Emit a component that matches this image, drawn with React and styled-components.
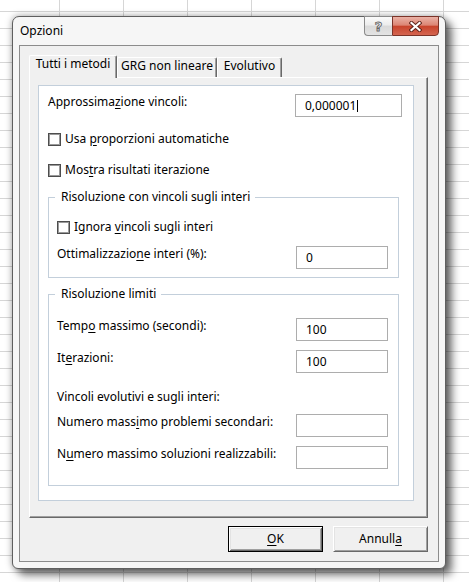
import React from "react";
import styled, { createGlobalStyle } from "styled-components";

const GlobalStyle = createGlobalStyle`
  html, body {
    margin: 0;
    padding: 0;
  }
  body {
    font-family: "Noto Sans", "Open Sans", sans-serif;
    font-size: 12px;
    color: #000;
  }
  * {
    box-sizing: border-box;
  }
`;

// excel sheet behind the dialog
const Desktop = styled.div`
  width: 469px;
  height: 582px;
  overflow: hidden;
  padding: 16px 0 0 12px;
  background-color: #fff;
  background-image: linear-gradient(to right, #d6d6d6 1px, transparent 1px),
    linear-gradient(to bottom, #d6d6d6 1px, transparent 1px);
  background-size: 64px 100%, 100% 17px;
  background-position: 59px 0, 0 11px;
`;

const Window = styled.div`
  width: 434px;
  height: 553px;
  display: flex;
  flex-direction: column;
  padding: 0 6px 6px;
  background: #f6f6f6;
  border: 1px solid #5f5f5f;
  border-radius: 7px 7px 6px 6px;
  box-shadow: 6px 6px 9px rgba(0, 0, 0, 0.55), 0 0 7px rgba(0, 0, 0, 0.35);
`;

const TitleBar = styled.div`
  height: 28px;
  flex-shrink: 0;
  display: flex;
  justify-content: space-between;
  align-items: flex-start;
`;

const Title = styled.div`
  align-self: center;
  padding-left: 1px;
  line-height: 16px;
`;

const Caption = styled.div`
  display: flex;
  margin-top: -1px;
`;

const HelpButton = styled.div`
  width: 28px;
  height: 20px;
  display: flex;
  align-items: center;
  justify-content: center;
  border: 1px solid #8a8a8a;
  border-right: none;
  border-radius: 0 0 0 4px;
  background: linear-gradient(#fbfbfb, #ececec 45%, #d9d9d9 50%, #e4e4e4);
  font-family: "DejaVu Sans", sans-serif;
  font-size: 13px;
  font-weight: bold;
  color: #f4f4f4;
  -webkit-text-stroke: 0.9px #666;
`;

const CloseButton = styled.div`
  width: 47px;
  height: 20px;
  display: flex;
  align-items: center;
  justify-content: center;
  border: 1px solid #7b3328;
  border-radius: 0 0 4px 0;
  background: linear-gradient(#eab2a6, #dc8574 45%, #c8442c 52%, #d46550);
`;

const Client = styled.div`
  flex: 1;
  display: flex;
  flex-direction: column;
  padding: 9px 10px 9px 9px;
  background: #f0f0f0;
  border: 1px solid #8c8c8c;
`;

const TabStrip = styled.div`
  height: 22px;
  flex-shrink: 0;
  display: flex;
  align-items: flex-end;
`;

const Tab = styled.div`
  position: relative;
  z-index: ${({ $active }) => ($active ? 1 : 0)};
  width: ${({ $w }) => $w}px;
  height: ${({ $active }) => ($active ? 23 : 20)}px;
  margin-bottom: ${({ $active }) => ($active ? -1 : 0)}px;
  background: #f0f0f0;
  border-top: 1px solid #fff;
  border-left: 1px solid #fff;
  border-right: 1px solid #696969;
  border-radius: 2px 2px 0 0;
  box-shadow: inset -1px 0 0 #a0a0a0;
  text-align: center;
  line-height: 16px;
  white-space: nowrap;
`;

const Panel = styled.div`
  flex: 1;
  display: flex;
  padding: 7px 13px 16px 8px;
  background: #f0f0f0;
  border-top: 1px solid #fff;
  border-left: 1px solid #fff;
  border-right: 1px solid #696969;
  border-bottom: 1px solid #696969;
  box-shadow: inset -1px -1px 0 #a0a0a0;
`;

const Sheet = styled.div`
  flex: 1;
  display: flex;
  flex-direction: column;
  padding: 8px 11px 0 9px;
  background: #fff;
  border: 1px solid #c3cfdb;
`;

const Row = styled.div`
  display: flex;
  justify-content: space-between;
  align-items: flex-start;
  margin-top: ${({ $mt }) => $mt || 0}px;
`;

const Label = styled.div`
  line-height: 16px;
  white-space: nowrap;
  margin-top: ${({ $mt }) => $mt || 0}px;
`;

const Field = styled.div`
  width: ${({ $w }) => $w}px;
  height: 23px;
  display: flex;
  align-items: center;
  padding-left: 9px;
  border: 1px solid #adadad;
  background: #fff;
  line-height: 16px;
`;

const Caret = styled.span`
  display: inline-block;
  width: 1px;
  height: 12px;
  margin-left: 1px;
  background: #000;
`;

const CheckRow = styled.div`
  height: 16px;
  display: flex;
  align-items: center;
  gap: 4px;
  margin-top: ${({ $mt }) => $mt || 0}px;
  line-height: 16px;
`;

const Box = styled.span`
  width: 13px;
  height: 13px;
  flex-shrink: 0;
  border: 1px solid #4d4d4d;
  box-shadow: inset 0 0 0 1px #9a9a9a;
  background: #fff;
`;

const Group = styled.fieldset`
  margin: ${({ $mt }) => $mt}px 3px 0 0;
  padding: ${({ $pt, $pb }) => `${$pt}px 10px ${$pb}px 8px`};
  border: 1px solid #c3cfdb;
  min-width: 0;
`;

const Legend = styled.legend`
  margin-left: -2px;
  padding: 0 5px 0 6px;
  line-height: 16px;
`;

const Key = styled.span`
  text-decoration: underline;
  text-underline-offset: 2px;
`;

const ButtonBar = styled.div`
  display: flex;
  justify-content: flex-end;
  gap: 10px;
  margin-top: 8px;
`;

const Button = styled.div`
  width: 95px;
  height: 26px;
  display: flex;
  align-items: center;
  justify-content: center;
  line-height: 16px;
  background: #f0f0f0;
  border: 1px solid;
  border-color: ${({ $default }) =>
    $default ? "#000" : "#fff #696969 #696969 #fff"};
  box-shadow: ${({ $default }) =>
    $default
      ? "inset 1px 1px 0 #fff, inset -1px -1px 0 #696969, inset 2px 2px 0 #e3e3e3, inset -2px -2px 0 #a0a0a0"
      : "inset 1px 1px 0 #e3e3e3, inset -1px -1px 0 #a0a0a0"};
`;

function CloseGlyph() {
  return (
    <svg width="13" height="11" viewBox="0 0 13 11">
      <path
        d="M2.5 2 L10.5 9 M10.5 2 L2.5 9"
        stroke="#5b2219"
        strokeWidth="4"
        strokeLinecap="square"
      />
      <path
        d="M2.5 2 L10.5 9 M10.5 2 L2.5 9"
        stroke="#fff"
        strokeWidth="2.2"
        strokeLinecap="square"
      />
    </svg>
  );
}

function Check({ children, mt }) {
  return (
    <CheckRow $mt={mt}>
      <Box />
      <span>{children}</span>
    </CheckRow>
  );
}

export default function App() {
  return (
    <Desktop>
      <GlobalStyle />
      <Window>
        <TitleBar>
          <Title>Opzioni</Title>
          <Caption>
            <HelpButton>?</HelpButton>
            <CloseButton>
              <CloseGlyph />
            </CloseButton>
          </Caption>
        </TitleBar>

        <Client>
          <TabStrip>
            <Tab $active $w={88}>
              Tutti i metodi
            </Tab>
            <Tab $w={100}>GRG non lineare</Tab>
            <Tab $w={65}>Evolutivo</Tab>
          </TabStrip>

          <Panel>
            <Sheet>
              <Row>
                <Label>
                  Approssima<Key>z</Key>ione vincoli:
                </Label>
                <Field $w={107}>
                  0,000001
                  <Caret />
                </Field>
              </Row>

              <Check mt={14}>
                Usa <Key>p</Key>roporzioni automatiche
              </Check>
              <Check mt={15}>
                Mos<Key>t</Key>ra risultati iterazione
              </Check>

              <Group $mt={11} $pt={14} $pb={8}>
                <Legend>Risoluzione con vincoli sugli interi</Legend>
                <Check>
                  Ignora <Key>v</Key>incoli sugli interi
                </Check>
                <Row $mt={11}>
                  <Label>
                    Ottimalizzazio<Key>n</Key>e interi (%):
                  </Label>
                  <Field $w={92}>0</Field>
                </Row>
              </Group>

              <Group $mt={8} $pt={16} $pb={16}>
                <Legend>Risoluzione limiti</Legend>
                <Row>
                  <Label>
                    Temp<Key>o</Key> massimo (secondi):
                  </Label>
                  <Field $w={92}>100</Field>
                </Row>
                <Row $mt={9}>
                  <Label>
                    It<Key>e</Key>razioni:
                  </Label>
                  <Field $w={92}>100</Field>
                </Row>
                <Label $mt={16}>Vincoli evolutivi e sugli interi:</Label>
                <Row $mt={9}>
                  <Label>
                    Numero mass<Key>i</Key>mo problemi secondari:
                  </Label>
                  <Field $w={92} />
                </Row>
                <Row $mt={9}>
                  <Label>
                    N<Key>u</Key>mero massimo soluzioni realizzabili:
                  </Label>
                  <Field $w={92} />
                </Row>
              </Group>
            </Sheet>
          </Panel>

          <ButtonBar>
            <Button $default>
              <Key>O</Key>K
            </Button>
            <Button>
              Annull<Key>a</Key>
            </Button>
          </ButtonBar>
        </Client>
      </Window>
    </Desktop>
  );
}
